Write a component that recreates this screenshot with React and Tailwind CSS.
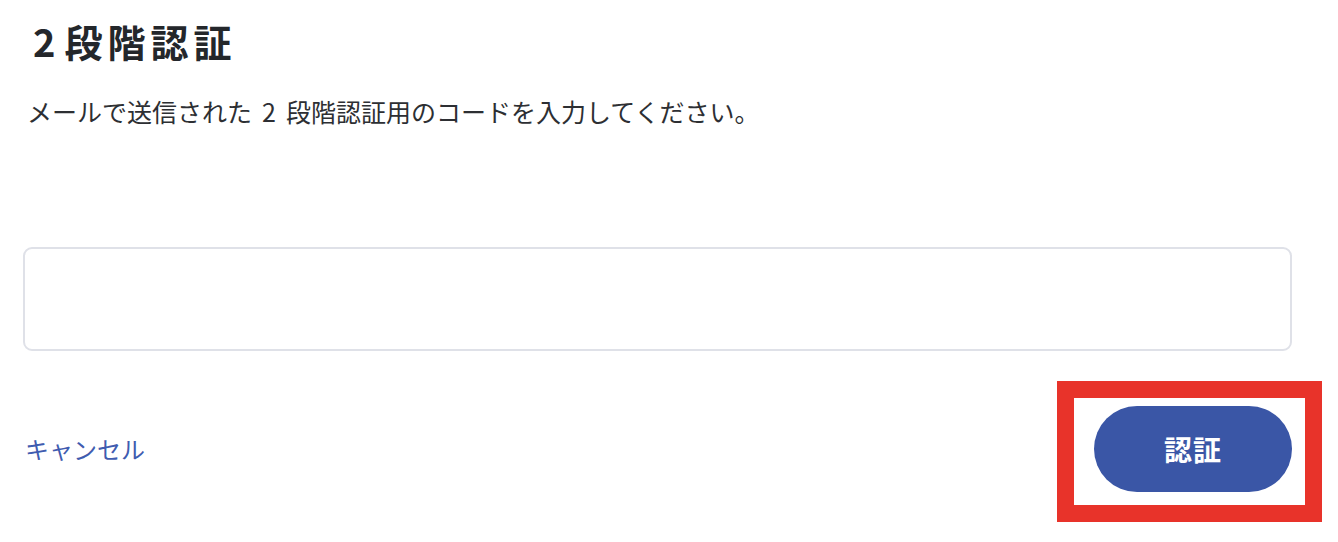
export default function App() {
  const jp = { fontFamily: '"Noto Sans CJK JP", "Noto Sans", sans-serif' };
  return (
    <div className="w-[1338px] h-[542px] bg-white overflow-hidden" style={jp}>
      <div className="pl-[33px] pt-[16px]">
        <h1 className="text-[38px] leading-[50px] font-bold text-[#24272b] tracking-[5px]">
          <span className="mr-[4px]">2</span>段階認証
        </h1>
      </div>
      <p className="pl-[27px] mt-[27px] text-[25px] leading-[36px] text-[#2d2f33]">
        メールで送信された<span className="mx-[10px]">2</span>段階認証用のコードを入力してください。
      </p>
      <div className="pl-[23px] pr-[46px] mt-[118px]">
        <input
          type="text"
          className="block w-full h-[104px] rounded-[9px] border-2 border-[#dfe1e8] bg-white outline-none"
        />
      </div>
      <div className="pl-[25px] pr-[46px] mt-[55px] flex items-center justify-between">
        <a className="text-[24px] leading-[36px] text-[#3f5cb0] cursor-pointer">キャンセル</a>
        <div className="relative">
          <div className="absolute -left-[37px] -right-[30px] -top-[25px] -bottom-[30px] border-[17px] border-[#e8332a] pointer-events-none"></div>
          <button className="w-[198px] h-[86px] rounded-full bg-[#3a56a6] text-white text-[28px] font-bold tracking-[1px]">
            認証
          </button>
        </div>
      </div>
    </div>
  );
}
